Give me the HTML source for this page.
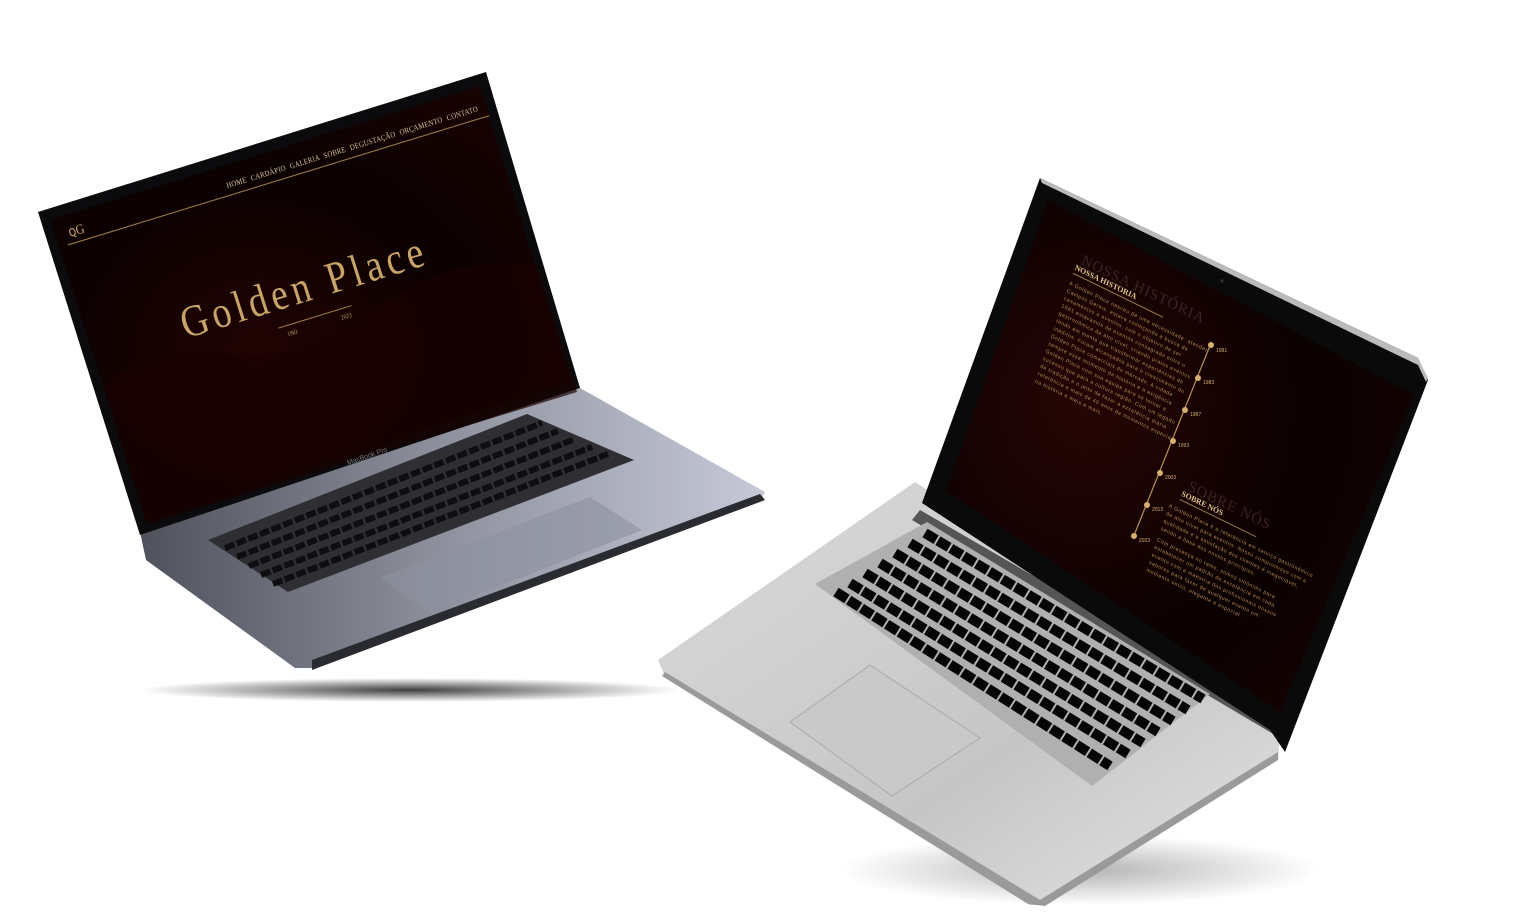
<!DOCTYPE html>
<html><head><meta charset="utf-8"><style>
html,body{margin:0;padding:0;background:#fff;width:1531px;height:919px;overflow:hidden}
svg{display:block}
</style></head><body>
<svg width="1531" height="919" viewBox="0 0 1531 919" xmlns="http://www.w3.org/2000/svg" font-family="Liberation Serif, serif">
<defs>
<radialGradient id="sh1" cx="0.5" cy="0.5" r="0.5"><stop offset="0" stop-color="#000" stop-opacity="0.75"/><stop offset="1" stop-color="#000" stop-opacity="0"/></radialGradient>
<radialGradient id="sh2" cx="0.5" cy="0.5" r="0.5"><stop offset="0" stop-color="#000" stop-opacity="0.3"/><stop offset="1" stop-color="#000" stop-opacity="0"/></radialGradient>
<linearGradient id="base1" x1="0" y1="0" x2="1" y2="0"><stop offset="0" stop-color="#4f525b"/><stop offset="0.45" stop-color="#8a8d99"/><stop offset="1" stop-color="#c6c9d9"/></linearGradient>
<linearGradient id="base2" x1="0" y1="0" x2="1" y2="1"><stop offset="0" stop-color="#dadada"/><stop offset="0.6" stop-color="#c6c6c6"/><stop offset="1" stop-color="#e4e4e4"/></linearGradient>
<radialGradient id="scr1" cx="0.4" cy="0.6" r="0.8"><stop offset="0" stop-color="#200303"/><stop offset="0.5" stop-color="#0c0101"/><stop offset="1" stop-color="#1b0303"/></radialGradient>
<radialGradient id="scr2" cx="0.3" cy="0.4" r="0.8"><stop offset="0" stop-color="#260505"/><stop offset="0.6" stop-color="#0b0101"/><stop offset="1" stop-color="#150202"/></radialGradient>
</defs>

<ellipse cx="410" cy="690" rx="270" ry="12" fill="url(#sh1)"/>
<ellipse cx="1080" cy="870" rx="240" ry="35" fill="url(#sh2)"/>

<polygon points="140,532 580,388 765,492 760,502 312,668 295,668 146,560" fill="url(#base1)"/>
<polygon points="312,660 760,494 765,500 312,670" fill="#2a2b30"/>
<polygon points="208,540 527,414 634,460 288,592" fill="#2e2e33"/>
<g stroke="#0e0e10" stroke-width="6" stroke-dasharray="10 2.5">
<line x1="225" y1="548" x2="542" y2="423"/><line x1="237" y1="557" x2="558" y2="431"/><line x1="249" y1="566" x2="575" y2="439"/><line x1="261" y1="575" x2="592" y2="447"/><line x1="273" y1="584" x2="608" y2="454"/>
</g>
<polygon points="380,578 590,497 642,530 430,613" fill="#8e919f" opacity="0.6"/>
<polygon points="38,212 486,72 580,388 140,535" fill="#0b0b0d"/>
<polygon points="50,220 480,86 571,381 147,524" fill="url(#scr1)"/>
<g transform="matrix(0.43,-0.132,0.1617,0.51,50,218)">
  <path d="M0,330 C200,250 350,420 550,360 S850,300 1000,350 L1000,600 L0,600Z" fill="#190202" opacity="0.7"/>
  <text x="30" y="45" fill="#c9a86a" font-size="26">ꞯG</text>
  <line x1="20" y1="58" x2="1000" y2="58" stroke="#9a7a48" stroke-width="2"/>
  <text x="980" y="44" fill="#d8c29a" font-size="15" text-anchor="end" letter-spacing="0.5" word-spacing="6">HOME CARDÁPIO GALERIA SOBRE DEGUSTAÇÃO ORÇAMENTO CONTATO</text>
  <text x="492" y="290" fill="#c9a46a" font-size="84" text-anchor="middle" letter-spacing="10">Golden Place</text>
  <line x1="410" y1="322" x2="580" y2="322" stroke="#9a7a48" stroke-width="2"/>
  <text x="425" y="342" fill="#c9a46a" font-size="12">1981</text>
  <text x="550" y="342" fill="#c9a46a" font-size="12">2023</text>
</g>
<text x="348" y="465" fill="#777" font-size="7" font-family="Liberation Sans" transform="rotate(-19 348 465)">MacBook Pro</text>

<polygon points="658,660 915,482 1282,712 1278,760 1045,905 1030,905 665,676" fill="url(#base2)"/>
<polygon points="665,672 1040,900 1278,752 1278,760 1045,906 1028,904 662,676" fill="#9a9a9a"/>
<polygon points="920,510 1282,720 1275,735 912,520" fill="#555"/>
<polygon points="815,584 927,522 1210,694 1092,786" fill="#b0b0b0"/>
<g stroke="#050505" stroke-width="10" stroke-dasharray="13 2">
<line x1="925" y1="533" x2="1203" y2="699"/><line x1="910" y1="543" x2="1188" y2="710"/><line x1="895" y1="553" x2="1173" y2="721"/>
<line x1="880" y1="563" x2="1158" y2="732"/><line x1="865" y1="573" x2="1143" y2="743"/><line x1="850" y1="583" x2="1128" y2="754"/><line x1="836" y1="592" x2="1110" y2="766"/>
</g>
<polygon points="790,722 870,665 980,738 892,796" fill="#c9c9c9" stroke="#aaa" stroke-width="1"/>
<polygon points="1040,178 1418,358 1428,380 1285,752 1270,730 922,503" fill="#0a0a0a"/>
<polygon points="1048,200 1414,395 1280,712 946,491" fill="url(#scr2)"/>
<polygon points="1040,178 1418,358 1428,378 1426,382 1418,365 1042,183" fill="#bbb"/>
<circle cx="1222" cy="281" r="1.6" fill="#333"/>
<g transform="matrix(0.9,0.44,-0.33,0.94,1077,262)" fill="#c9a46a">
  <text x="4" y="0" font-size="15" fill="#4a2a2a" opacity="0.8" letter-spacing="1">NOSSA HISTÓRIA</text>
  <text x="0" y="8" font-size="8" font-weight="bold" fill="#e2c48a">NOSSA HISTORIA</text>
  <line x1="0" y1="12" x2="100" y2="12" stroke="#9a7a48" stroke-width="1"/>
  <g font-size="5.2" font-family="Liberation Sans" letter-spacing="0.6" fill="#b88f55">
   <text x="0" y="24">A Golden Place nasceu de uma necessidade: atender</text>
   <text x="0" y="32">Campos Gerais, estava começando a busca de</text>
   <text x="0" y="40">casamentos e eventos, com o objetivo de ser</text>
   <text x="0" y="48">1981 estávamos de eventos consagrado entre o</text>
   <text x="0" y="56">gastronômico de alto nível, criando pratos eventos</text>
   <text x="0" y="64">tendo em mente que transformar experiências de</text>
   <text x="0" y="72">inéditos. Foram alcançados para o crescimento do</text>
   <text x="0" y="80">Golden Place comerciais do mercado. A cidade</text>
   <text x="0" y="88">sempre esse momento da história e a exigência</text>
   <text x="0" y="96">Golden Place com sua equipe para se tornar a</text>
   <text x="0" y="104">sucesso que para a cultura região. Com um legado</text>
   <text x="0" y="112">de tradição e o jeito de fazer a excelência diária</text>
   <text x="0" y="120">referência e mais de 40 anos de momentos especiais</text>
   <text x="0" y="128">na história e mais e mais.</text>
  </g>
</g>
<g stroke="#b88f55" stroke-width="1.2"><line x1="1211" y1="343" x2="1133" y2="538"/></g>
<g fill="#d6b070" font-size="5" font-family="Liberation Sans">
 <circle cx="1211" cy="345" r="3"/><text x="1216" y="352">1981</text>
 <circle cx="1198" cy="378" r="3"/><text x="1203" y="384">1983</text>
 <circle cx="1185" cy="410" r="3"/><text x="1190" y="416">1987</text>
 <circle cx="1173" cy="441" r="3"/><text x="1178" y="447">1993</text>
 <circle cx="1160" cy="473" r="3"/><text x="1165" y="479">2003</text>
 <circle cx="1147" cy="505" r="3"/><text x="1152" y="511">2013</text>
 <circle cx="1134" cy="536" r="3"/><text x="1139" y="542">2023</text>
</g>
<g transform="matrix(0.9,0.44,-0.33,0.94,1183,490)" fill="#c9a46a">
  <text x="4" y="-2" font-size="15" fill="#4a2a2a" opacity="0.8" letter-spacing="1">SOBRE NÓS</text>
  <text x="0" y="6" font-size="8" font-weight="bold" fill="#e2c48a">SOBRE NÓS</text>
  <line x1="0" y1="10" x2="85" y2="10" stroke="#9a7a48" stroke-width="1"/>
  <g font-size="5.2" font-family="Liberation Sans" letter-spacing="0.6" fill="#b88f55">
   <text x="-8" y="22">A Golden Place é a referência em serviço gastronômico</text>
   <text x="-8" y="30">de alto nível para eventos. Nosso compromisso com a</text>
   <text x="-8" y="38">qualidade e a satisfação dos clientes é inegociável,</text>
   <text x="-8" y="46">sendo a base dos nossos princípios.</text>
   <text x="-8" y="58">Com presença no ramo, somos sinônimo para</text>
   <text x="-8" y="66">estabelecer um padrão de excelência em cada</text>
   <text x="-8" y="74">evento com a maestria dos profissionais nossos</text>
   <text x="-8" y="82">sabores para fazer de qualquer evento um</text>
   <text x="-8" y="90">momento único, elegante e especial.</text>
  </g>
</g>
</svg>
</body></html>
